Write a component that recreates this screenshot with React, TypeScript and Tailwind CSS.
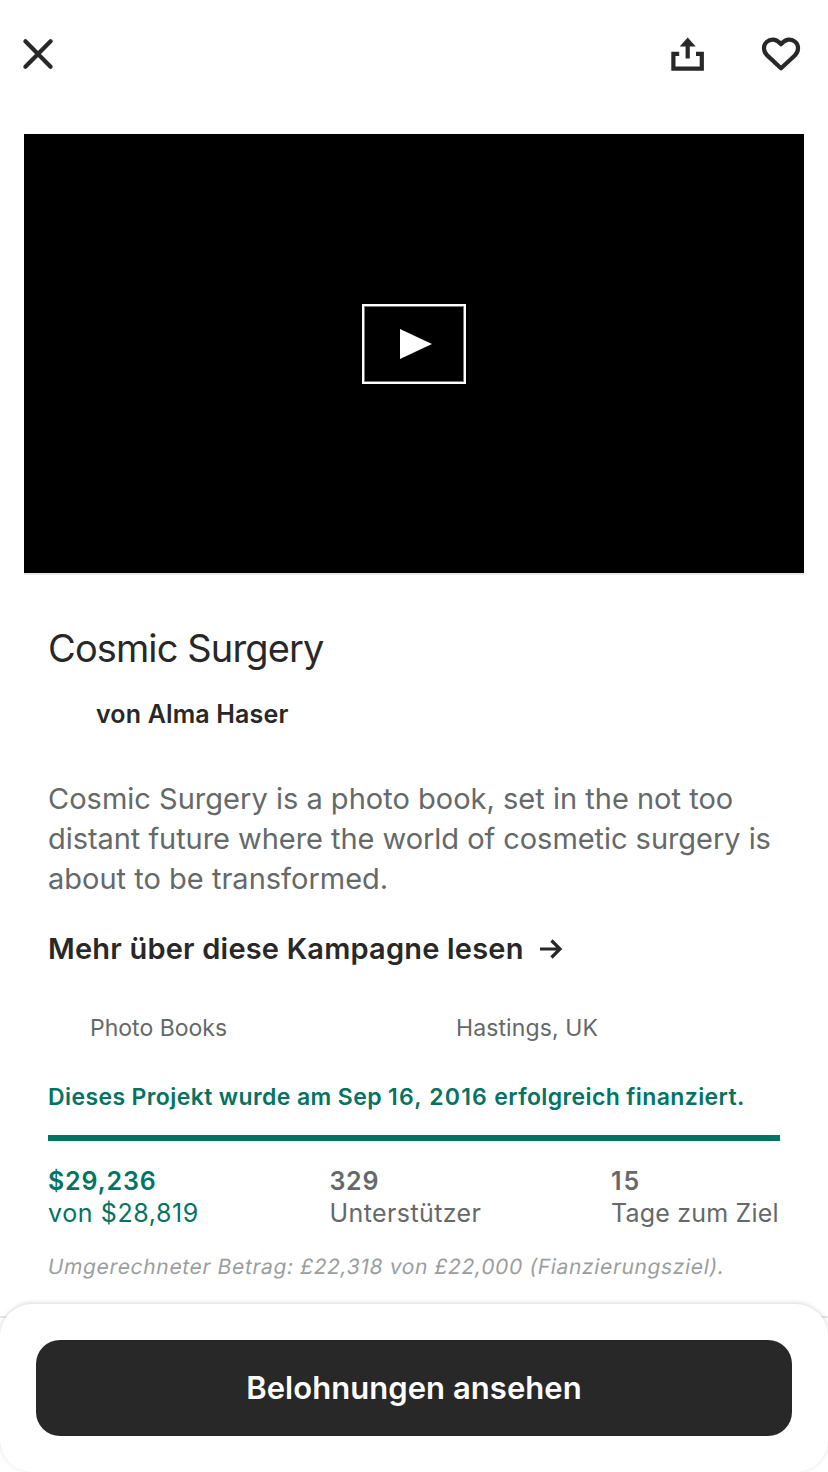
import React from "react";

const stats = [
  { value: "$29,236", label: "von $28,819", tone: "text-[#037362]", valueTracking: "tracking-[0.85px]", labelTracking: "tracking-[0.6px]" },
  { value: "329", label: "Unterstützer", tone: "text-[#656969]", valueTracking: "tracking-[0.7px]", labelTracking: "tracking-[0.4px]" },
  { value: "15", label: "Tage zum Ziel", tone: "text-[#656969]", valueTracking: "tracking-[2px]", labelTracking: "tracking-[0.2px]" },
];

function CloseIcon() {
  return (
    <svg width="32" height="32" viewBox="0 0 32 32" fill="none" stroke="#282828" strokeWidth="4.2" strokeLinecap="round">
      <path d="M3.4 3.2L28.6 28.8M28.6 3.2L3.4 28.8" />
    </svg>
  );
}

function ShareIcon() {
  return (
    <svg width="34" height="34" viewBox="0 0 34 34" fill="none" stroke="#282828" strokeWidth="4.2" className="overflow-visible">
      <path d="M8.2 15.8H2.4V30.6H30.8V15.8H25" />
      <path d="M16.7 20.5V8" />
      <path d="M16.7 -0.6L24.7 8.6H8.7Z" fill="#282828" stroke="none" />
    </svg>
  );
}

function HeartIcon() {
  return (
    <svg width="38" height="34" viewBox="0 0 38 34" fill="none" stroke="#282828" strokeWidth="4.2" strokeLinejoin="round" className="overflow-visible">
      <path d="M19 30.3L5.2 17.4C1 13.4 1 7.2 4.6 4C8.6 0.4 14.5 0.6 19 6.2C23.5 0.6 29.4 0.4 33.4 4C37 7.2 37 13.4 32.8 17.4Z" />
    </svg>
  );
}

export default function App() {
  return (
    <div className="relative flex h-[1472px] w-[828px] flex-col overflow-hidden bg-white font-['Inter',sans-serif] text-[#282828]">
      <header className="flex h-[134px] shrink-0 items-start justify-between pt-[38px] pr-7 pl-[22px]">
        <button aria-label="Schließen"><CloseIcon /></button>
        <div className="flex gap-[57px]">
          <button aria-label="Teilen"><ShareIcon /></button>
          <button aria-label="Merken"><HeartIcon /></button>
        </div>
      </header>

      <div className="mx-6 flex h-[441px] shrink-0 items-center justify-center border-b-2 border-[#e6e6e6] bg-black">
        <button aria-label="Abspielen" className="mt-[-19px] flex h-20 w-[104px] items-center justify-center border-2 border-white shadow-[inset_0_0_0_1px_#7a7a7a]">
          <svg width="32" height="30" viewBox="0 0 32 30" className="ml-1"><path d="M0 0L32 15L0 30Z" fill="white" /></svg>
        </button>
      </div>

      <main className="flex flex-col px-12 pt-[51px] whitespace-nowrap">
        <h1 className="text-[38px] leading-[44px] tracking-[-0.88px]">Cosmic Surgery</h1>
        <p className="mt-7 pl-12 text-[25px] leading-8 font-semibold tracking-[0.15px]">von Alma Haser</p>
        <p className="mt-[49px] text-[29px] leading-10 tracking-[0.01px] text-[#656969]">
          Cosmic Surgery is a photo book, set in the not too<br />
          <span className="tracking-[-0.05px]">distant future where the world of cosmetic surgery is</span><br />
          about to be transformed.
        </p>
        <a className="mt-[30px] flex items-center gap-[15px] text-[29px] leading-10 font-semibold tracking-[0.2px]">
          Mehr über diese Kampagne lesen
          <svg width="24" height="20" viewBox="0 0 24 20" fill="none" stroke="#282828" strokeWidth="3.2"><path d="M1 10H21.5M12.5 1.5L21 10L12.5 18.5" /></svg>
        </a>
        <div className="mt-[43px] grid grid-cols-2 text-[23px] leading-8 text-[#656969]">
          <span className="pl-[42px]">Photo Books</span>
          <span className="pl-[42px] tracking-[0.1px]">Hastings, UK</span>
        </div>
        <p className="mt-[37px] text-[23px] leading-8 font-semibold tracking-[0.39px] text-[#037362]">
          Dieses Projekt wurde am Sep <span className="tracking-[1.2px]">16, 2016</span> erfolgreich finanziert.
        </p>
        <div className="mt-[22px] h-1.5 w-full bg-[#037362]" />
        <dl className="mt-6 flex">
          {stats.map((stat) => (
            <div key={stat.value} className={`w-[281.5px] shrink-0 text-[25px] leading-8 ${stat.tone}`}>
              <dt className={`font-semibold ${stat.valueTracking}`}>{stat.value}</dt>
              <dd className={stat.labelTracking}>{stat.label}</dd>
            </div>
          ))}
        </dl>
        <p className="mt-[22px] -skew-x-10 text-[21px] leading-8 tracking-[0.65px] text-[#9b9e9e]">
          Umgerechneter Betrag: £22,318 von £22,000 (Fianzierungsziel).
        </p>
      </main>

      <div className="absolute top-[1316px] h-0.5 w-full bg-[#e6e6e6]" />
      <footer className="absolute bottom-0 h-[168px] w-full rounded-[32px] bg-white px-9 pt-9 shadow-[0_-1px_4px_rgba(0,0,0,0.16)]">
        <button className="h-24 w-full rounded-3xl bg-[#282828] text-[31px] font-semibold tracking-[0.05px] text-white">Belohnungen ansehen</button>
      </footer>
    </div>
  );
}
